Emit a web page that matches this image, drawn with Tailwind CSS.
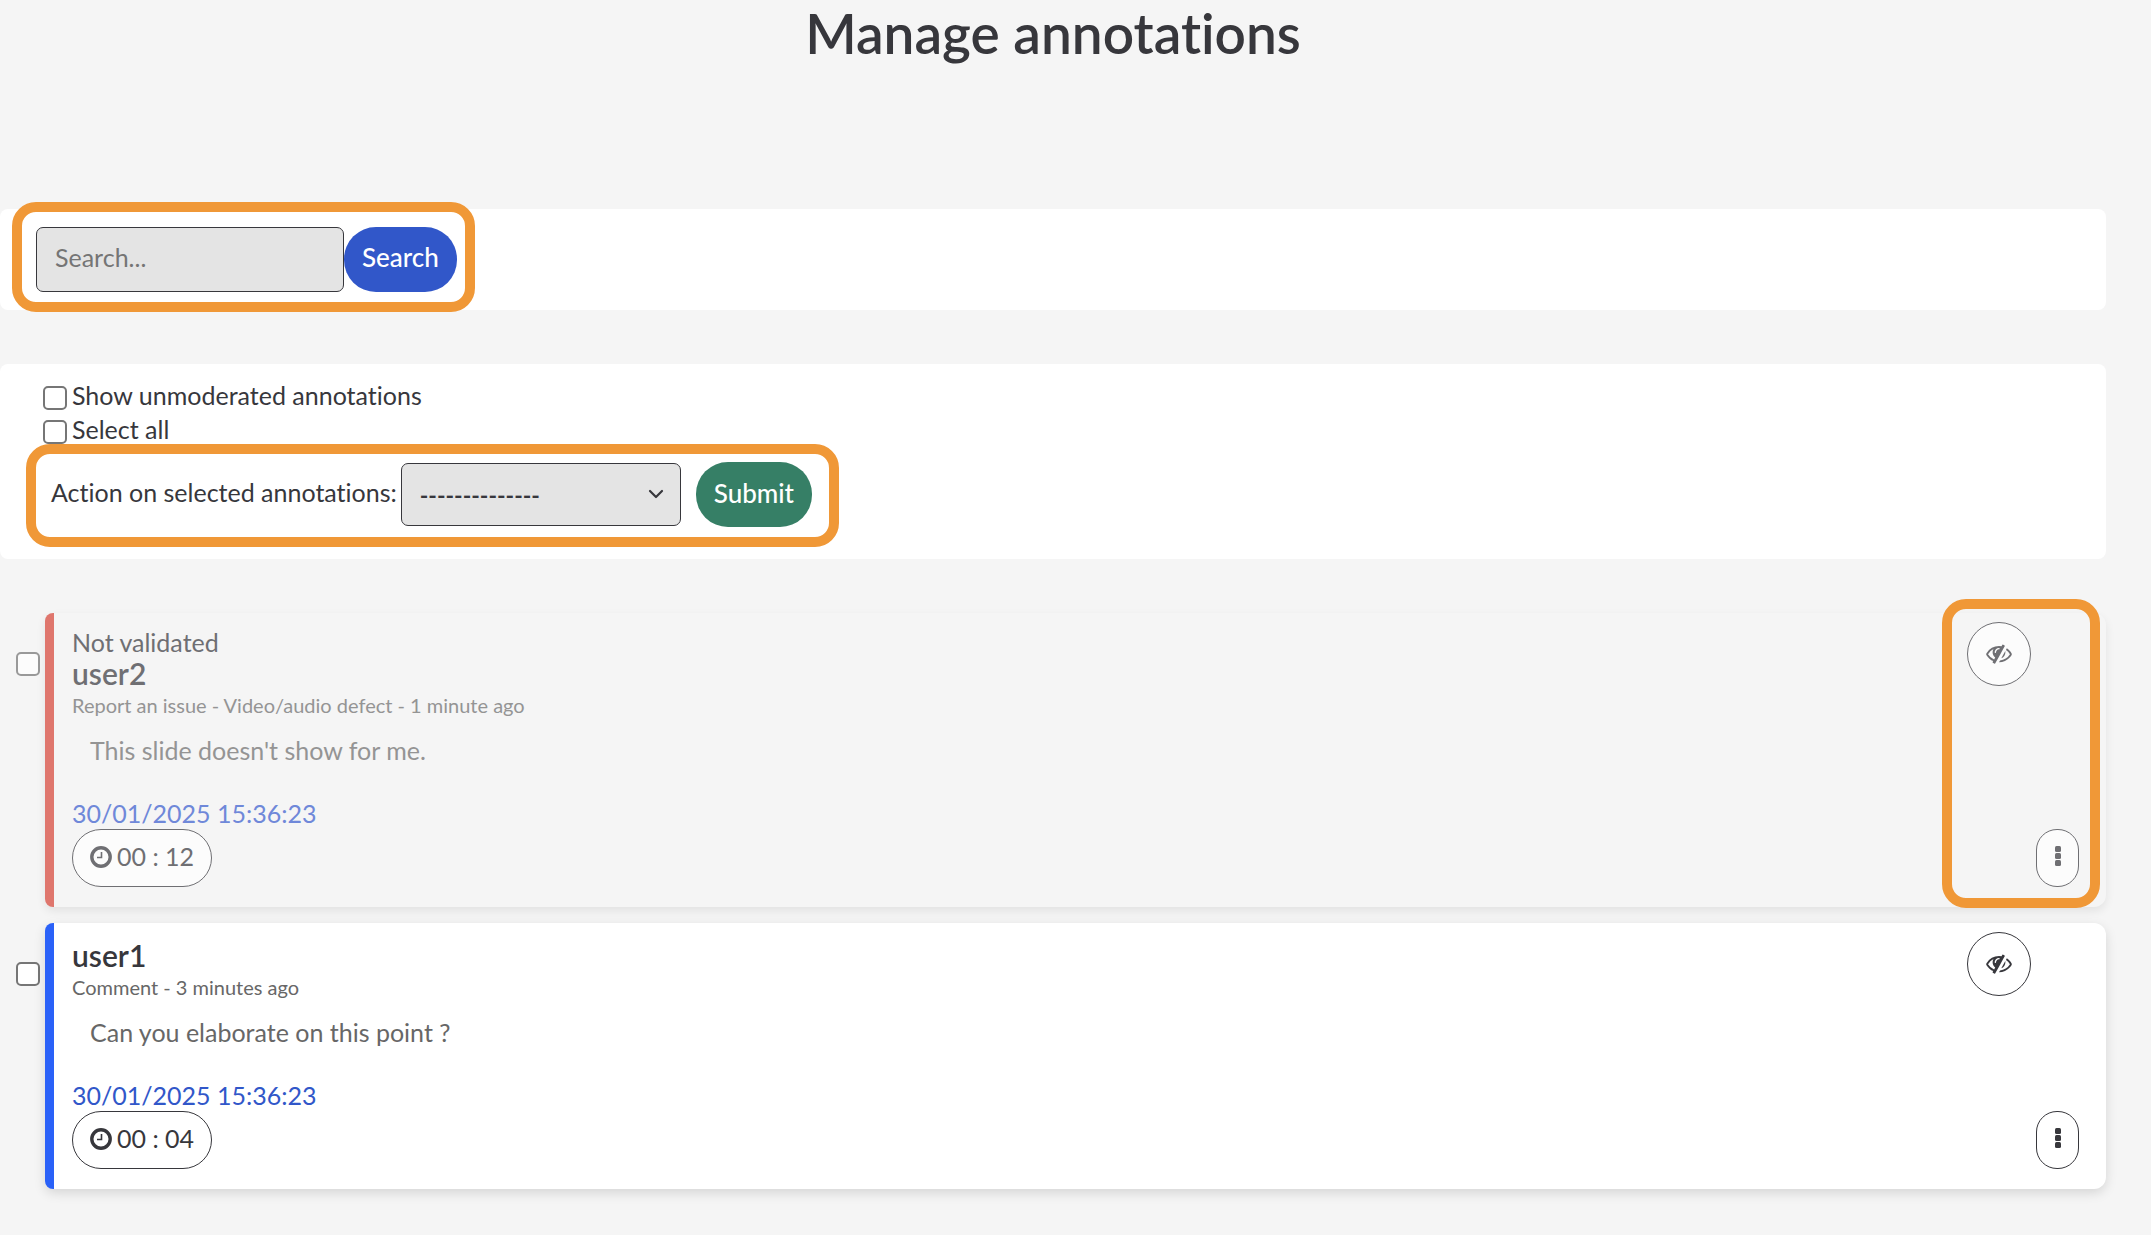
<!DOCTYPE html>
<html lang="en">
<head>
    <meta charset="UTF-8">
    <meta name="viewport" content="width=device-width, initial-scale=1.0">
    <title>Manage annotations</title>
    <script src="https://cdn.jsdelivr.net/npm/@tailwindcss/browser@4"></script>
</head>
<body class="min-h-screen bg-[#f5f5f5] font-['Lato',sans-serif] text-[25px] leading-[34px] text-[#37373c] [font-variant-ligatures:none]">
<!-- Shared icons -->
<svg class="hidden">
    <symbol id="icon-clock" viewBox="0 0 22 22">
        <circle cx="11" cy="11" r="9.200" fill="none" stroke="currentColor" stroke-width="3.400"/>
        <path d="M11.500 6v5.500H7" fill="none" stroke="currentColor" stroke-width="1.600"/>
    </symbol>
    <symbol id="icon-eye-slash" viewBox="0 250 1792 1400">
        <path fill="currentColor" d="M555 1335l78-141q-87-63-136-159t-49-203q0-121 61-225-229 117-381 353 167 258 427 375zm389-759q0-20-14-34t-34-14q-125 0-214.500 89.500t-89.500 214.500q0 20 14 34t34 14 34-14 14-34q0-86 61-147t147-61q20 0 34-14t14-34zm363-191q0 7-1 9-106 189-316 567t-315 566l-49 89q-10 16-28 16-12 0-134-70-16-10-16-28 0-12 44-87-143-65-263.500-173t-208.500-245q-20-31-20-69t20-69q153-235 380-371t496-136q89 0 180 17l54-97q10-16 28-16 5 0 18 6t31 15.500 33 18.500 31.500 18.500 19.500 11.500q16 10 16 27zm37 447q0 139-79 253.500t-209 164.500l280-502q8 45 8 84zm448 128q0 35-20 69-39 64-109 145-150 172-347.500 267t-419.500 95l74-132q212-18 392.500-137t301.500-307q-115-179-282-294l63-112q95 64 182.500 153t144.500 184q20 34 20 69z"/>
    </symbol>
    <symbol id="icon-more" viewBox="0 0 6 20">
        <g fill="currentColor">
            <rect width="6" height="6" rx="1.500"/>
            <rect y="7" width="6" height="6" rx="1.500"/>
            <rect y="14" width="6" height="6" rx="1.500"/>
        </g>
    </symbol>
</svg>

<main class="mr-[45px]">
    <h1 class="pt-[3px] text-center text-[55px] leading-[60px] font-semibold">Manage annotations</h1>

    <!-- Search -->
    <section class="relative mt-[146px] rounded-lg bg-white py-[18px] pl-9">
        <form class="flex">
            <input type="search" aria-label="Search" placeholder="Search..." class="h-[65px] w-[308px] rounded-[7px] border border-[#37373c] bg-[#e4e4e4] px-[18px] pb-1.5 placeholder:text-[#757575]">
            <button type="button" class="h-[65px] rounded-[32px] bg-[#3157c9] px-[18px] pb-1.5 text-[26px] font-medium text-white">Search</button>
        </form>
        <div class="pointer-events-none absolute -top-[7px] left-3 h-[110px] w-[463px] rounded-3xl border-10 border-[#f09837]"></div>
    </section>

    <!-- Bulk actions -->
    <section class="mt-[54px] rounded-lg bg-white pt-3.5 pb-8">
        <div class="flex items-center gap-[5px] pl-[43px]">
            <input type="checkbox" id="unmoderated" class="mt-1.5 size-6 appearance-none rounded-[5px] border-2 border-[#767676] bg-white">
            <label for="unmoderated">Show unmoderated annotations</label>
        </div>
        <div class="flex items-center gap-[5px] pl-[43px]">
            <input type="checkbox" id="select-all" class="mt-1.5 size-6 appearance-none rounded-[5px] border-2 border-[#767676] bg-white">
            <label for="select-all">Select all</label>
        </div>
        <form class="relative mt-4 flex items-center pl-[51px]">
            <label for="action" class="pb-1.5">Action on selected annotations:</label>
            <div class="relative ml-1">
                <select id="action" class="block h-[63px] w-[280px] appearance-none rounded-[7px] border border-[#37373c] bg-[#e4e4e4] px-[18px] text-[23px] font-bold">
                    <option>--------------</option>
                </select>
                <svg class="pointer-events-none absolute top-[26px] right-[17px] h-3 w-4" viewBox="0 0 16 12" fill="none" stroke="currentColor" stroke-width="2.200" stroke-linecap="round" stroke-linejoin="round"><path d="M2 2l6 6 6-6"/></svg>
            </div>
            <button type="button" class="ml-[15px] h-[65px] rounded-[32px] bg-[#367f66] px-[18px] pb-1 text-[26px] font-medium text-white">Submit</button>
            <div class="pointer-events-none absolute -top-[18px] left-[26px] h-[103px] w-[813px] rounded-3xl border-10 border-[#f09837]"></div>
        </form>
    </section>

    <!-- Annotations -->
    <section class="mt-[54px] flex flex-col gap-4">
        <div class="flex gap-[5px] pl-4">
            <input type="checkbox" aria-label="Select annotation by user2" class="mt-[39px] size-6 shrink-0 appearance-none rounded-[5px] border-2 border-[#999] bg-[#fcfcfc]">
            <article class="relative flex grow justify-between rounded-l-lg rounded-r-xl border-l-[9px] border-[#df766d] bg-[#f5f5f5] pt-3 pr-[27px] pb-5 pl-[18px] text-[#6f6f73] shadow-[0_4px_10px_rgba(0,0,0,0.08)]">
                <div>
                    <p>Not validated</p>
                    <h2 class="text-[30px] leading-[29px] font-semibold">user2</h2>
                    <p class="text-[20px] leading-[35px] text-[#949494]">Report an issue - Video/audio defect - 1 minute ago</p>
                    <p class="mt-2.5 pl-[18px] text-[#949494]">This slide doesn't show for me.</p>
                    <a href="#" class="mt-[31px] block leading-[31px] text-[#6f88d9]">30/01/2025 15:36:23</a>
                    <button type="button" class="flex h-[58px] items-center gap-[5px] rounded-[29px] border border-[#6f6f73] bg-[#fcfcfc] px-[17px] pb-0.5">
                        <svg class="size-[22px]"><use href="#icon-clock"/></svg>
                        <span class="pb-0.5">00 : 12</span>
                    </button>
                </div>
                <div class="-mt-[3px] flex flex-col items-end justify-between">
                    <button type="button" aria-label="Hide annotation" class="mr-12 flex size-16 items-center justify-center rounded-full border border-[#6f6f73] bg-[#fcfcfc]">
                        <svg class="h-5 w-[26px]"><use href="#icon-eye-slash"/></svg>
                    </button>
                    <button type="button" aria-label="More actions" class="flex h-[58px] w-[43px] items-center justify-center rounded-[21px] border border-[#6f6f73] bg-[#fcfcfc] pb-1">
                        <svg class="h-5 w-1.5"><use href="#icon-more"/></svg>
                    </button>
                </div>
                <div class="pointer-events-none absolute -top-[14px] right-1.5 h-[309px] w-[158px] rounded-3xl border-10 border-[#f09837]"></div>
            </article>
        </div>

        <div class="flex gap-[5px] pl-4">
            <input type="checkbox" aria-label="Select annotation by user1" class="mt-[39px] size-6 shrink-0 appearance-none rounded-[5px] border-2 border-[#767676] bg-white">
            <article class="flex grow justify-between rounded-l-lg rounded-r-xl border-l-[9px] border-[#2a61f8] bg-white pt-[18px] pr-[27px] pb-5 pl-[18px] shadow-[0_4px_12px_rgba(0,0,0,0.13)]">
                <div>
                    <h2 class="text-[30px] leading-[29px] font-semibold">user1</h2>
                    <p class="text-[20px] leading-[35px] text-[#676767]">Comment - 3 minutes ago</p>
                    <p class="mt-2.5 pl-[18px] text-[#676767]">Can you elaborate on this point ?</p>
                    <a href="#" class="mt-[31px] block leading-[31px] text-[#3157c9]">30/01/2025 15:36:23</a>
                    <button type="button" class="flex h-[58px] items-center gap-[5px] rounded-[29px] border border-[#37373c] bg-white px-[17px] pb-0.5">
                        <svg class="size-[22px]"><use href="#icon-clock"/></svg>
                        <span class="pb-0.5">00 : 04</span>
                    </button>
                </div>
                <div class="-mt-[9px] flex flex-col items-end justify-between">
                    <button type="button" aria-label="Hide annotation" class="mr-12 flex size-16 items-center justify-center rounded-full border border-[#37373c] bg-white">
                        <svg class="h-5 w-[26px]"><use href="#icon-eye-slash"/></svg>
                    </button>
                    <button type="button" aria-label="More actions" class="flex h-[58px] w-[43px] items-center justify-center rounded-[21px] border border-[#37373c] bg-white pb-1">
                        <svg class="h-5 w-1.5"><use href="#icon-more"/></svg>
                    </button>
                </div>
            </article>
        </div>
    </section>
</main>
</body>
</html>
